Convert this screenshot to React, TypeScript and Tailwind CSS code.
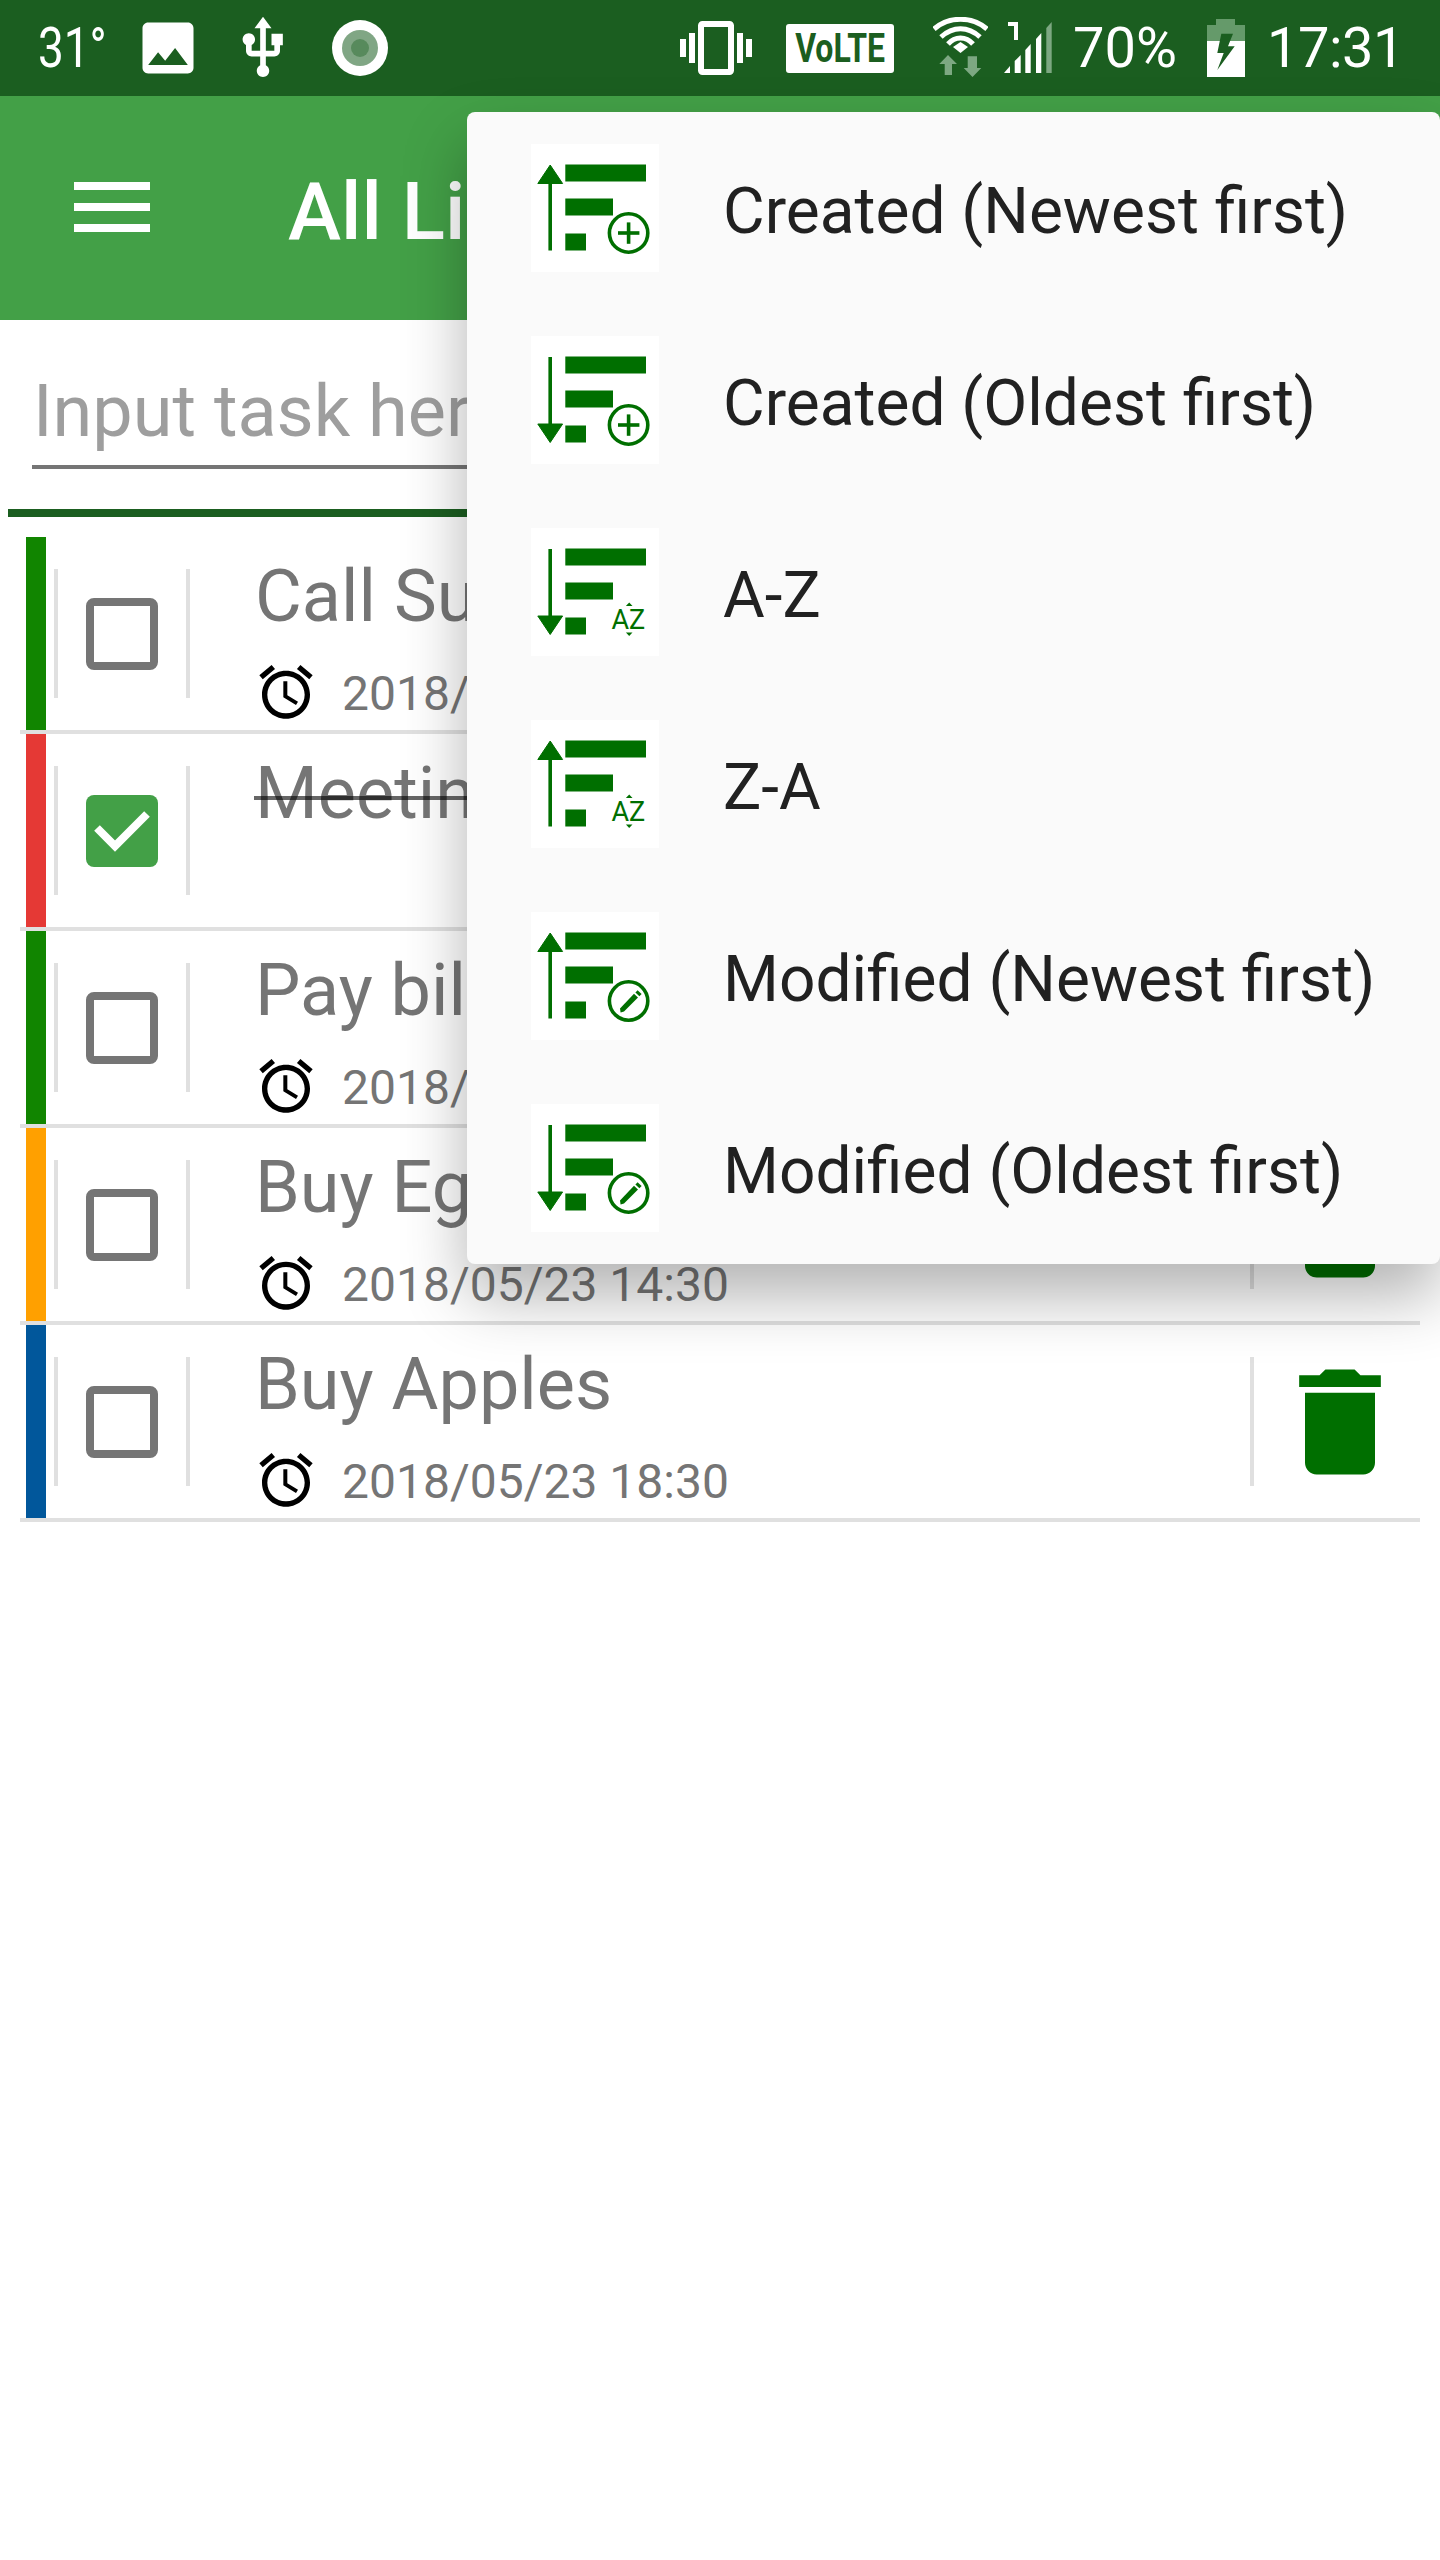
const GREEN = "#006f00";
const FADED = "#7da882";

type Task = { title: string; date?: string; color: string; done?: boolean };

const tasks: Task[] = [
  { title: "Call Susan", date: "2018/05/23 09:30", color: "bg-[#118500]" },
  { title: "Meeting", color: "bg-[#e53935]", done: true },
  { title: "Pay bills", date: "2018/05/23 12:00", color: "bg-[#118500]" },
  { title: "Buy Eggs", date: "2018/05/23 14:30", color: "bg-[#ffa000]" },
  { title: "Buy Apples", date: "2018/05/23 18:30", color: "bg-[#01579b]" },
];

type Sort = { label: string; up: boolean; badge: "plus" | "az" | "edit" };

const sorts: Sort[] = [
  { label: "Created (Newest first)", up: true, badge: "plus" },
  { label: "Created (Oldest first)", up: false, badge: "plus" },
  { label: "A-Z", up: false, badge: "az" },
  { label: "Z-A", up: true, badge: "az" },
  { label: "Modified (Newest first)", up: true, badge: "edit" },
  { label: "Modified (Oldest first)", up: false, badge: "edit" },
];

function SortIcon({ up, badge }: { up: boolean; badge: Sort["badge"] }) {
  return (
    <svg viewBox="0 0 128 128" className="h-32 w-32 shrink-0 bg-white" fill={GREEN}>
      <rect x="34.3" y="20.5" width="80.7" height="17" />
      <rect x="34.3" y="54.5" width="47.7" height="17" />
      <rect x="34.3" y="89.5" width="20.7" height="17" />
      {up ? (
        <>
          <rect x="17.4" y="36" width="3.6" height="70.5" />
          <path d="M19.2 21 L31.6 39.5 H6.8 Z" stroke={GREEN} strokeWidth="1" strokeLinejoin="round" />
        </>
      ) : (
        <>
          <rect x="17.4" y="21" width="3.6" height="70" />
          <path d="M19.2 106.5 L31.6 88 H6.8 Z" stroke={GREEN} strokeWidth="1" strokeLinejoin="round" />
        </>
      )}
      {badge === "plus" && (
        <>
          <circle cx="97.6" cy="89" r="19.2" fill="white" stroke={GREEN} strokeWidth="3.6" />
          <rect x="87" y="87.2" width="21.4" height="3.6" />
          <rect x="95.8" y="78.4" width="3.6" height="21.4" />
        </>
      )}
      {badge === "edit" && (
        <>
          <circle cx="97.6" cy="89" r="19.2" fill="white" stroke={GREEN} strokeWidth="3.6" />
          <path d="M89 96.5 L89.6 100.6 L93 99.6 L107 85.6 L103 81.8 Z" />
          <path d="M104.4 80.4 L106.6 78.2 L110.6 82 L108.4 84.2 Z" />
        </>
      )}
      {badge === "az" && (
        <>
          <text x="80.5" y="100.8" fontFamily="Roboto, sans-serif" fontSize="27" fill={GREEN}>
            AZ
          </text>
          <path d="M98.2 74.5 L101.5 78 H94.9 Z" />
          <path d="M98.2 108 L101.5 104.5 H94.9 Z" />
        </>
      )}
    </svg>
  );
}

function AlarmIcon() {
  return (
    <svg viewBox="0 0 24 24" className="h-16 w-16 shrink-0" fill="#000">
      <path d="M22 5.72l-4.6-3.86-1.29 1.53 4.6 3.86L22 5.72zM7.88 3.39L6.6 1.86 2 5.71l1.29 1.53 4.59-3.85zM12.5 8H11v6l4.75 2.85.75-1.23-4-2.37V8zM12 4c-4.97 0-9 4.03-9 9s4.02 9 9 9c4.97 0 9-4.03 9-9s-4.03-9-9-9zm0 16c-3.87 0-7-3.13-7-7s3.13-7 7-7 7 3.13 7 7-3.13 7-7 7z" />
    </svg>
  );
}

function TrashIcon() {
  return (
    <svg viewBox="0 0 24 24" className="ml-4 h-[140px] w-[140px] shrink-0" fill={GREEN}>
      <path d="M6 19c0 1.1.9 2 2 2h8c1.1 0 2-.9 2-2V7H6v12zM19 4h-3.5l-1-1h-5l-1 1H5v2h14V4z" />
    </svg>
  );
}

function StatusBar() {
  return (
    <div className="flex h-24 items-center bg-[#1b5e20] pl-[38px] pr-[36px] text-[56px] leading-none text-white">
      <span className="w-[96px] origin-left [transform:scaleX(0.82)]">31°</span>
      <svg viewBox="0 0 24 24" className="h-[68px] w-[68px]" fill="white">
        <path d="M21 19V5c0-1.1-.9-2-2-2H5c-1.1 0-2 .9-2 2v14c0 1.1.9 2 2 2h14c1.1 0 2-.9 2-2zM8.5 13.5l2.5 3.01L14.5 12l4.5 6H5l3.5-4.5z" />
      </svg>
      <svg viewBox="0 0 24 24" className="ml-[27px] h-[68px] w-[68px]" fill="white">
        <path d="M15 7v4h1v2h-3V5h2l-3-4-3 4h2v8H8v-2.07c.7-.37 1.2-1.08 1.2-1.93 0-1.21-.99-2.2-2.2-2.2-1.21 0-2.2.99-2.2 2.2 0 .85.5 1.56 1.2 1.93V13c0 1.11.89 2 2 2h3v3.05c-.71.37-1.2 1.1-1.2 1.95 0 1.22.99 2.2 2.2 2.2 1.21 0 2.2-.98 2.2-2.2 0-.85-.49-1.58-1.2-1.95V15h3c1.11 0 2-.89 2-2v-2h1V7h-4z" />
      </svg>
      <svg viewBox="0 0 56 56" className="ml-[35px] h-14 w-14">
        <circle cx="28" cy="28" r="28" fill="white" />
        <circle cx="28" cy="28" r="18" fill="#80a684" />
        <circle cx="28" cy="28" r="9" fill="#578a5c" />
      </svg>
      <div className="flex-1" />
      <svg viewBox="0 0 24 24" className="h-[72px] w-[72px]" fill="white">
        <path d="M0 15h2V9H0v6zm3 2h2V7H3v10zm19-8v6h2V9h-2zm-3 8h2V7h-2v10zM16.5 3h-9C6.67 3 6 3.67 6 4.5v15c0 .83.67 1.5 1.5 1.5h9c.83 0 1.5-.67 1.5-1.5v-15c0-.83-.67-1.5-1.5-1.5zM16 19H8V5h8v14z" />
      </svg>
      <div className="ml-[34px] flex h-[49px] w-[108px] items-center justify-center rounded-[3px] bg-white text-[32px] font-bold text-[#1b5e20]">
        <span className="[transform:scaleY(1.25)]">VoLTE</span>
      </div>
      <svg viewBox="0 0 55 62" className="ml-[39px] h-[62px] w-[55px]" fill="none" stroke="white">
        <path d="M1 12 C16 -1 39 -1 54 12" strokeWidth="5" />
        <path d="M8 20 C20 9 35 9 47 20" strokeWidth="5" />
        <path d="M15 27 C22 19 33 19 40 27" strokeWidth="5" />
        <path d="M20 30 L27.5 25 L35 30 L27.5 36 Z" fill="white" stroke="none" />
        <path d="M15 38 L24 47 H19 V58 H11.7 V47 H6.3 Z" fill={FADED} stroke="none" />
        <path d="M34.7 39.3 H44 V51 H48.3 L39.5 60 L30.7 51 H34.7 Z" fill={FADED} stroke="none" />
      </svg>
      <svg viewBox="0 0 48 52" className="ml-[16px] h-[52px] w-12" fill="white">
        <path d="M4 0 H14 V18 H10 V4 H4 Z" />
        <path d="M0 51 L6 44 V51 Z" />
        <path d="M10.7 39 L16.7 33 V51 H10.7 Z" />
        <path d="M21.3 28 L26.7 22 V51 H21.3 Z" />
        <path d="M32 17 L37.3 11 V51 H32 Z" />
        <path d="M42.3 6 L47.7 0 V51 H42.3 Z" fill={FADED} />
      </svg>
      <span className="ml-[21px]">70%</span>
      <svg viewBox="0 0 38 58" className="ml-[30px] h-[58px] w-[38px]">
        <path d="M9 0 H28 V6 H38 V22 H0 V6 H9 Z" fill="#659a6a" />
        <rect x="0" y="22" width="38" height="36" fill="white" />
        <path d="M25.3 14.7 H14.3 L10.3 34 H16.7 L10.3 51 L27.7 27.3 H21 L26 14.7 Z" fill="#1b5e20" />
      </svg>
      <span className="ml-[22px] tracking-[-0.5px]">17:31</span>
    </div>
  );
}

function TaskRow({ task }: { task: Task }) {
  return (
    <div className="mx-5 flex h-[197px] w-[1400px] border-b-4 border-[#e0e0e0]">
      <div className={`ml-[6px] w-5 shrink-0 ${task.color}`} />
      <div className="ml-2 flex h-[129px] w-[136px] shrink-0 items-center justify-center self-center border-x-4 border-[#e0e0e0]">
        {task.done ? (
          <div className="h-[72px] w-[72px] rounded-lg bg-[#43a047]">
            <svg viewBox="0 0 72 72" className="h-[72px] w-[72px]" fill="none" stroke="white" strokeWidth="8">
              <path d="M11 33 L29 51 L61 19" />
            </svg>
          </div>
        ) : (
          <div className="h-[72px] w-[72px] rounded-lg border-8 border-[#757575]" />
        )}
      </div>
      <div className="relative ml-[65px] min-w-0 flex-1 pt-[18px] text-[#757575]">
        <div className="text-[72px] leading-[84px]">{task.title}</div>
        {task.done && <div className="absolute left-[-1px] top-[62px] h-1 w-[500px] bg-black/60" />}
        {task.date && (
          <div className="-ml-px mt-[18px] flex items-center gap-6 text-[48px] leading-[64px]">
            <AlarmIcon />
            <span className="pt-[5px]">{task.date}</span>
          </div>
        )}
      </div>
      <div className="flex w-[170px] shrink-0 items-center self-center">
        <div className="h-[129px] w-1 shrink-0 bg-[#e0e0e0]" />
        <TrashIcon />
      </div>
    </div>
  );
}

export default function App() {
  return (
    <div className="relative h-[2560px] w-[1440px] overflow-hidden bg-white [font-family:Roboto,sans-serif]">
      <StatusBar />
      <div className="flex h-56 items-center bg-[#43a047] pl-[64px] text-white">
        <svg viewBox="0 0 96 96" className="h-24 w-24 shrink-0" fill="white">
          <rect x="10" y="22" width="76" height="8" />
          <rect x="10" y="43" width="76" height="8" />
          <rect x="10" y="64" width="76" height="8" />
        </svg>
        <span className="ml-[128px] mt-2 text-[80px] font-medium">All Lists</span>
      </div>

      <div className="mx-2 h-[197px] border-b-8 border-[#1b5e20] px-6 pt-[50px]">
        <div className="h-[99px] border-b-4 border-[#757575] pl-px text-[72px] leading-[84px] text-[#9e9e9e]">
          Input task here
        </div>
      </div>

      <div className="pt-5">
        {tasks.map((task) => (
          <TaskRow key={task.title} task={task} />
        ))}
      </div>

      <div className="absolute right-0 top-28 w-[973px] rounded-lg bg-[#fafafa] shadow-[0_32px_64px_rgba(0,0,0,0.3)]">
        {sorts.map((sort) => (
          <div key={sort.label} className="flex h-48 items-center pl-16">
            <SortIcon up={sort.up} badge={sort.badge} />
            <span className="ml-[64px] mt-2 text-[64px] text-[#212121]">{sort.label}</span>
          </div>
        ))}
      </div>
    </div>
  );
}
